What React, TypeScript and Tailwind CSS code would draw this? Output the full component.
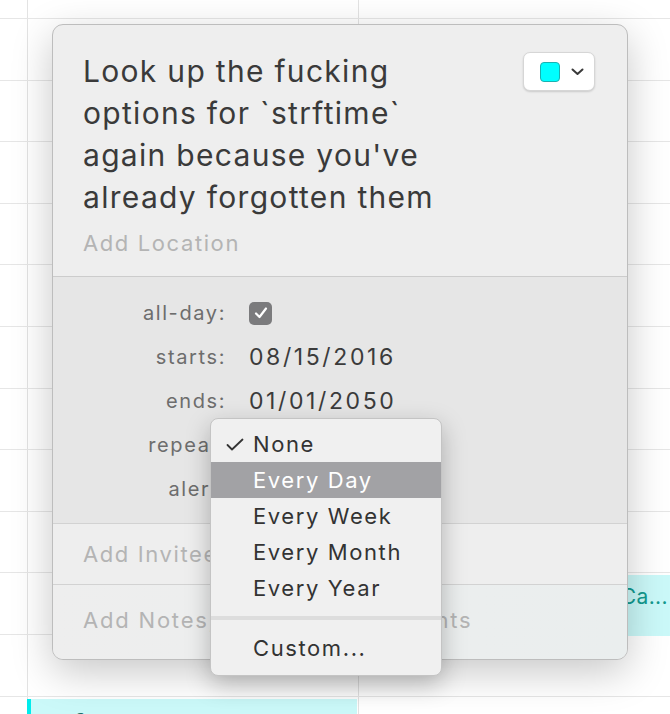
import React from "react";

const font = { fontFamily: "Inter, 'Noto Sans', sans-serif" };

function GridBackground() {
  const rows = Array.from({ length: 12 });
  return (
    <div className="absolute inset-0 flex">
      <div className="w-[27px] shrink-0" />
      <div className="w-[331px] shrink-0 border-l border-[#e3e3e3]" />
      <div className="flex-1 border-l border-[#e3e3e3]" />
      <div className="absolute inset-0 flex flex-col">
        <div className="h-[18px] shrink-0" />
        {rows.map((_, i) => (
          <div key={i} className="h-[61.6px] shrink-0 border-t border-[#e6e6e6]" />
        ))}
      </div>
    </div>
  );
}

function Events() {
  return (
    <>
      <div className="absolute left-[360px] top-[575px] w-[310px] h-[61px] bg-[#cbf9f9] flex justify-end items-start pt-[9px] pr-[2px]">
        <span className="text-[21px] text-[#139a8f] leading-[26px] tracking-[0.4px]" style={font}>Ca...</span>
      </div>
      <div className="absolute left-[27px] top-[699px] w-[330px] h-[20px] bg-[#cbf9f9] flex">
        <div className="w-[4px] h-full bg-[#00ecec]" />
        <span className="ml-[44px] mt-[8px] text-[20px] leading-[20px] text-[#1f6f6a]" style={font}>a</span>
      </div>
    </>
  );
}

function Row({ label, children }: { label: string; children?: React.ReactNode }) {
  return (
    <div className="flex items-center h-[44px]">
      <div className="w-[173px] text-right text-[20px] text-[#6d6d6d] tracking-[1.6px]">{label}</div>
      <div className="ml-[23px] flex items-center text-[23px] text-[#3b3b3b] tracking-[2.6px]">{children}</div>
    </div>
  );
}

function Popover() {
  return (
    <div
      className="absolute left-[52px] top-[24px] w-[576px] h-[636px] rounded-[11px] border border-[#bdbdbd] bg-[#eeeeee] overflow-hidden shadow-[0_12px_40px_rgba(0,0,0,0.22)] flex flex-col"
      style={font}
    >
      <div className="relative pl-[30px] pt-[25px] pb-[16px] h-[251px] shrink-0">
        <div className="text-[30px] leading-[42px] text-[#3a3a3a] tracking-[1.3px]">
          Look up the fucking
          <br />
          options for `strftime`
          <br />
          again because you've
          <br />
          already forgotten them
        </div>
        <div className="mt-[10px] text-[22px] leading-[30px] text-[#b4b4b4] tracking-[1.6px]">Add Location</div>
        <div className="absolute right-[32px] top-[27px] w-[72px] h-[39px] bg-white rounded-[7px] border border-[#d6d6d6] shadow-[0_1px_2px_rgba(0,0,0,0.15)] flex items-center pl-[16px] gap-[11px]">
          <div className="w-[20px] h-[20px] rounded-[4px] bg-[#00ffff] border border-[#1ab0b0]" />
          <svg width="13" height="8" viewBox="0 0 13 8">
            <path d="M1.5 1.5 L6.5 6 L11.5 1.5" fill="none" stroke="#3a3a3a" strokeWidth="2" strokeLinecap="round" strokeLinejoin="round" />
          </svg>
        </div>
      </div>
      <div className="h-px bg-[#cccccc] shrink-0" />
      <div className="bg-[#e6e6e6] h-[246px] shrink-0 pt-[14px]">
        <Row label="all-day:">
          <div className="w-[23px] h-[23px] rounded-[5px] bg-[#7b7b7d] flex items-center justify-center">
            <svg width="14" height="12" viewBox="0 0 14 12">
              <path d="M2 6.5 L5.5 10 L12 1.5" fill="none" stroke="white" strokeWidth="2.2" strokeLinecap="round" strokeLinejoin="round" />
            </svg>
          </div>
        </Row>
        <Row label="starts:">08/15/2016</Row>
        <Row label="ends:">01/01/2050</Row>
        <Row label="repeat:">None</Row>
        <Row label="alert:">None</Row>
      </div>
      <div className="h-px bg-[#d2d2d2] shrink-0" />
      <div className="h-[60px] shrink-0 pl-[30px] flex items-center text-[22px] text-[#b4b4b4] tracking-[1.6px]">
        Add Invitees
      </div>
      <div className="h-px bg-[#d2d2d2] shrink-0" />
      <div className="flex-1 pl-[30px] pt-[20px] text-[22px] leading-[30px] text-[#b4b4b4] tracking-[1.8px] whitespace-nowrap bg-gradient-to-r from-[#eeeeee] to-[#eaeeee]">
        Add Notes, URL, or Attachments
      </div>
    </div>
  );
}

function Item({ children, checked, active }: { children: React.ReactNode; checked?: boolean; active?: boolean }) {
  return (
    <div className={`relative h-[36px] flex items-center pl-[42px] text-[22px] tracking-[1.6px] ${active ? "bg-[#a2a2a5] text-white" : "text-[#333333]"}`}>
      {checked && (
        <svg className="absolute left-[15px] top-[12px]" width="18" height="13" viewBox="0 0 18 13">
          <path d="M1.5 7 L6 11.5 L16.5 1.5" fill="none" stroke="#333" strokeWidth="1.8" strokeLinecap="round" strokeLinejoin="round" />
        </svg>
      )}
      {children}
    </div>
  );
}

function Menu() {
  return (
    <div
      className="absolute left-[210px] top-[418px] w-[232px] rounded-[8px] border border-[#c4c4c4] bg-[#f0f0f0] pt-[7px] pb-[9px] shadow-[0_8px_24px_rgba(0,0,0,0.25)]"
      style={font}
    >
      <Item checked>None</Item>
      <Item active>Every Day</Item>
      <Item>Every Week</Item>
      <Item>Every Month</Item>
      <Item>Every Year</Item>
      <div className="h-[24px] flex items-center">
        <div className="w-full h-[4px] bg-[#dddddd]" />
      </div>
      <Item>Custom...</Item>
    </div>
  );
}

export default function App() {
  return (
    <div className="relative w-[670px] h-[714px] bg-white overflow-hidden">
      <GridBackground />
      <Events />
      <Popover />
      <Menu />
    </div>
  );
}
